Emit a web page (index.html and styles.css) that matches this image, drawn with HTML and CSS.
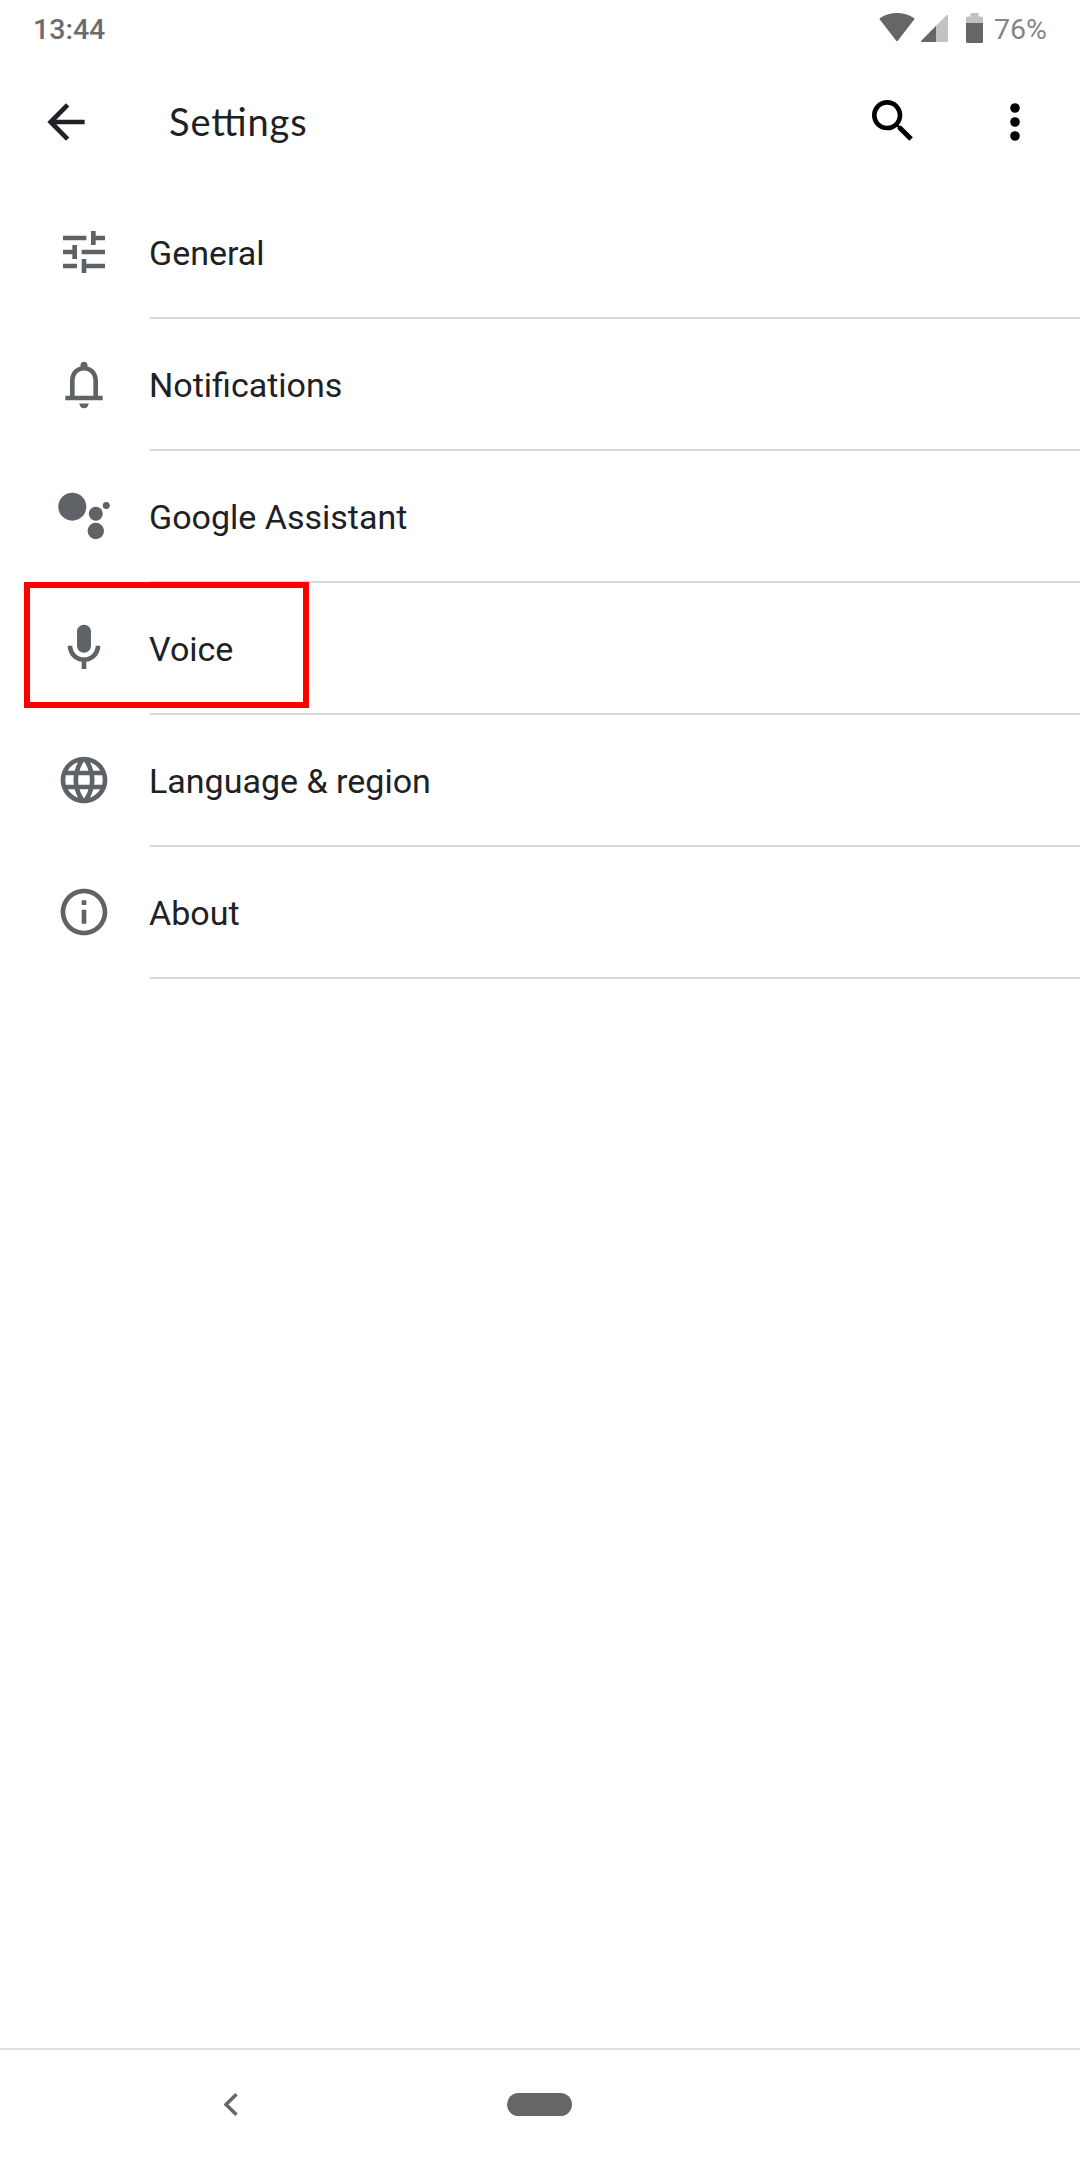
FILE: index.html
```html
<!DOCTYPE html>
<html lang="en">
<head>
<meta charset="utf-8">
<title>Settings</title>
<link rel="stylesheet" href="styles.css">
</head>
<body>
<div class="screen">
  <div class="status-bar">
    <span class="clock">13:44</span>
    <div class="status-icons">
      <svg class="wifi" viewBox="0 0 36 29"><path d="M.8 6.6Q0 5.600 1.200 4.900C11-1.500 25-1.500 34.800 4.900Q36 5.600 35.200 6.600L19 27.500Q18 28.700 17 27.500Z"/></svg>
      <svg class="signal" viewBox="0 0 27 27"><path class="pale" d="M25.300.4Q27-.8 27 1.200V25.500Q27 27 25.500 27H15V10.700Z"/><path d="M15 10.700V27H1Q-.6 27 .5 25.500Z"/></svg>
      <svg class="battery" viewBox="0 0 17 30"><path class="pale" d="M4.500 0H12.500V3.500H15.500Q17 3.500 17 5V10H0V5Q0 3.500 1.500 3.500H4.500Z"/><path d="M0 10H17V28.500Q17 30 15.500 30H1.500Q0 30 0 28.500Z"/></svg>
      <span class="percent">76%</span>
    </div>
  </div>
  <header class="app-bar">
    <svg class="icon dark" viewBox="0 0 24 24"><path d="M20 11H7.830l5.590-5.590L12 4l-8 8 8 8 1.410-1.410L7.830 13H20v-2z"/></svg>
    <h1 class="title">Settings</h1>
    <svg class="icon black search" viewBox="0 0 24 24"><path d="M15.500 14h-.79l-.28-.27C15.410 12.590 16 11.110 16 9.500 16 5.910 13.090 3 9.500 3S3 5.910 3 9.500 5.910 16 9.500 16c1.610 0 3.090-.59 4.230-1.570l.27.28v.79l5 4.990L20.490 19l-4.990-5zm-6 0C7.010 14 5 11.990 5 9.500S7.010 5 9.500 5 14 7.010 14 9.500 11.990 14 9.500 14z"/></svg>
    <svg class="icon black" viewBox="0 0 24 24"><circle cx="12" cy="6" r="2.050"/><circle cx="12" cy="12" r="2.050"/><circle cx="12" cy="18" r="2.050"/></svg>
  </header>
  <main class="list">
    <div class="row">
      <svg class="icon" viewBox="0 0 24 24"><path d="M3 17v2h6v-2H3zM3 5v2h10V5H3zm10 16v-2h8v-2h-8v-2h-2v6h2zM7 9v2H3v2h4v2h2V9H7zm14 4v-2H11v2h10zm-6-4h2V7h4V5h-4V3h-2v6z"/></svg>
      <div class="label">General</div>
    </div>
    <div class="row">
      <svg class="icon" viewBox="0 0 24 24"><path d="M18 17V10.500C18 7.600 16.300 5.200 13.500 4.500V4a1.500 1.500 0 0 0-3 0v.5C7.700 5.200 6 7.600 6 10.500V17H4v2h16v-2zM16 17H8v-6.500C8 8 9.600 6.200 12 6.200S16 8 16 10.500zM10 20.400h4a2 2 0 0 1-4 0z"/></svg>
      <div class="label">Notifications</div>
    </div>
    <div class="row">
      <svg class="icon" viewBox="0 0 56 56"><circle cx="16.300" cy="18.700" r="14"/><circle cx="39.800" cy="25.700" r="7"/><circle cx="50.300" cy="17.400" r="3.500"/><circle cx="39.800" cy="43" r="8.200"/></svg>
      <div class="label">Google Assistant</div>
    </div>
    <div class="row marked">
      <svg class="icon" viewBox="0 0 24 24"><path d="M12 14c1.660 0 3-1.340 3-3V5c0-1.660-1.340-3-3-3S9 3.340 9 5v6c0 1.660 1.340 3 3 3zm5-3c0 2.760-2.240 5-5 5s-5-2.240-5-5H5c0 3.530 2.610 6.430 6 6.920V21h2v-3.080c3.390-.49 6-3.390 6-6.920h-2z"/></svg>
      <div class="label">Voice</div>
    </div>
    <div class="row">
      <svg class="icon" viewBox="0 0 24 24"><path d="M11.990 2C6.470 2 2 6.480 2 12s4.470 10 9.990 10C17.520 22 22 17.520 22 12S17.520 2 11.990 2zm6.930 6h-2.950c-.32-1.250-.78-2.450-1.380-3.560 1.840.63 3.370 1.910 4.330 3.560zM12 4.040c.83 1.200 1.480 2.530 1.910 3.960h-3.820c.43-1.430 1.080-2.760 1.910-3.960zM4.260 14C4.100 13.360 4 12.690 4 12s.1-1.360.26-2h3.380c-.08.66-.14 1.320-.14 2s.06 1.340.14 2H4.260zm.82 2h2.950c.32 1.250.78 2.450 1.380 3.560-1.840-.63-3.370-1.900-4.330-3.560zm2.950-8H5.080c.96-1.660 2.490-2.930 4.330-3.560C8.810 5.550 8.350 6.750 8.030 8zM12 19.960c-.83-1.200-1.480-2.530-1.910-3.960h3.820c-.43 1.430-1.080 2.760-1.910 3.960zM14.340 14H9.660c-.09-.66-.16-1.320-.16-2s.07-1.350.16-2h4.680c.09.65.16 1.320.16 2s-.07 1.340-.16 2zm.25 5.560c.6-1.110 1.060-2.310 1.380-3.560h2.950c-.96 1.650-2.490 2.930-4.330 3.560zM16.360 14c.08-.66.14-1.320.14-2s-.06-1.340-.14-2h3.380c.16.640.26 1.310.26 2s-.1 1.360-.26 2h-3.380z"/></svg>
      <div class="label">Language &amp; region</div>
    </div>
    <div class="row">
      <svg class="icon" viewBox="0 0 24 24"><path d="M11 7h2v2h-2zm0 4h2v6h-2zm1-9C6.480 2 2 6.480 2 12s4.480 10 10 10 10-4.480 10-10S17.520 2 12 2zm0 18c-4.410 0-8-3.590-8-8s3.590-8 8-8 8 3.590 8 8-3.590 8-8 8z"/></svg>
      <div class="label">About</div>
    </div>
  </main>
  <nav class="nav-bar">
    <svg class="nav-back" viewBox="0 0 14 23"><path d="M12.500 1.200 2 11.500 12.500 21.800"/></svg>
    <div class="home-pill"></div>
  </nav>
</div>
</body>
</html>
```
FILE: styles.css
```css
*,
*::after {
  box-sizing: border-box;
}

body {
  margin: 0;
  background: #fff;
  font-family: Roboto, sans-serif;
  color: #202124;
}

.screen {
  display: flex;
  flex-direction: column;
  width: 1080px;
  height: 2160px;
}

svg {
  display: block;
  flex: none;
}

.status-bar {
  display: flex;
  justify-content: space-between;
  height: 56px;
  padding: 0 33px;
  font-size: 28.500px;
  line-height: 60px;
}

.clock {
  color: #6c6c6c;
  font-weight: 500;
}

.status-icons {
  display: flex;
  align-items: flex-start;
  fill: #666;
}

.wifi {
  width: 36px;
  height: 29px;
  margin: 13px 6px 0 0;
}

.signal {
  width: 27px;
  height: 27px;
  margin: 15px 18px 0 0;
}

.battery {
  width: 17px;
  height: 30px;
  margin: 13px 11px 0 0;
}

.pale {
  fill: #c2c2c2;
}

.percent {
  color: #858585;
}

.app-bar {
  display: flex;
  align-items: center;
  height: 131px;
  padding: 0 37px 0 38px;
}

.icon {
  width: 56px;
  height: 56px;
  flex: none;
  fill: #5f6368;
}

.dark {
  fill: #202124;
}

.black {
  fill: #000;
}

.search {
  margin: 0 66px 2px 0;
}

.title {
  flex: 1;
  margin: 0 0 1px 75px;
  font: 400 38px/56px Lato, sans-serif;
  letter-spacing: .9px;
  font-feature-settings: "liga" 1;
}

.list {
  flex: 1;
}

.row {
  position: relative;
  display: flex;
  align-items: center;
  gap: 38px;
  height: 132px;
  padding-left: 56px;
}

.row .icon {
  margin-bottom: 2px;
}

.label {
  flex: 1;
  height: 132px;
  border-bottom: 2px solid #dadada;
  font-size: 34px;
  line-height: 132px;
  text-indent: -1px;
}

.marked::after {
  content: "";
  position: absolute;
  left: 24px;
  top: -1px;
  width: 285px;
  height: 126px;
  border: 6px solid #f00;
}

.nav-bar {
  display: grid;
  grid-template-columns: 224px 283px 65px;
  align-items: center;
  height: 112px;
  padding-bottom: 1px;
  border-top: 2px solid #e0e0e0;
}

.nav-back {
  grid-column: 2;
  width: 14px;
  height: 23px;
  fill: none;
  stroke: #666;
  stroke-width: 3.500;
}

.home-pill {
  height: 23px;
  border-radius: 12px;
  background: #666;
}
```
